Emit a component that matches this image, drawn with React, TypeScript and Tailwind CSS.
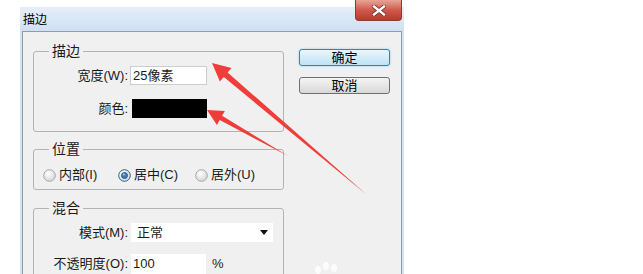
import React from 'react'

function Radio({ checked }: { checked?: boolean }) {
  return (
    <svg width="13" height="13" viewBox="0 0 13 13" className="shrink-0">
      <defs>
        <radialGradient id={checked ? 'rc' : 'ru'} cx="0.4" cy="0.35" r="0.7">
          <stop offset="0" stopColor="#ffffff" />
          <stop offset="1" stopColor="#d4d4d4" />
        </radialGradient>
      </defs>
      <circle cx="6.5" cy="6.5" r="5.8" fill={`url(#${checked ? 'rc' : 'ru'})`} stroke={checked ? '#2c628b' : '#a6a6a6'} strokeWidth="1" />
      {checked && <circle cx="6.5" cy="6.5" r="3" fill="#3a7cc0" stroke="#1d4c76" strokeWidth="0.8" />}
      {checked && <circle cx="5.8" cy="5.6" r="1" fill="#a9d4f5" />}
    </svg>
  )
}

function Group({ title, className, children }: { title: string; className: string; children: React.ReactNode }) {
  return (
    <fieldset className={`w-[251px] border border-[#b3b3b3] rounded-[3px] ${className}`}>
      <legend className="ml-[15px] px-[3px] h-[16px] leading-[16px] text-[14px] text-[#1a1a1a]">{title}</legend>
      {children}
    </fieldset>
  )
}

export default function App() {
  return (
    <div className="relative w-[643px] h-[274px] overflow-hidden bg-white pt-[7px] pl-[20px] text-[13px] text-[#1a1a1a] font-['Liberation_Sans','Noto_Sans_CJK_SC',sans-serif]">
      <div className="w-[384px] h-[267px] flex flex-col px-[2px] bg-[#d3e2f2]">
        <div className="h-[24px] shrink-0 -mx-[2px] pl-[3px] pt-[2px] flex items-center bg-gradient-to-b from-[#e6eef8] to-[#d0e0f2] text-[12px] text-black">
          描边
        </div>
        <div className="flex-1 flex border border-[#8d9cb0] bg-[#f0f0f0]">
          <div className="pl-[10px] pt-[11px] flex flex-col">
            <Group title="描边" className="h-[89px] shrink-0">
              <div className="mt-[7px] h-[19px] flex items-center">
                <span className="w-[94px] text-right">宽度(W):</span>
                <div className="ml-[2px] w-[77px] h-[19px] bg-white border border-[#c9ced4] flex items-center pl-[2px]">25像素</div>
              </div>
              <div className="mt-[14px] h-[19px] flex items-center">
                <span className="w-[94px] text-right">颜色:</span>
                <div className="ml-[4px] w-[75px] h-[19px] bg-black" />
              </div>
            </Group>
            <Group title="位置" className="mt-[9px] h-[49px] shrink-0">
              <div className="mt-[11px] h-[14px] pl-[9px] flex items-center">
                <div className="w-[75px] flex items-center gap-[3px]">
                  <Radio />
                  <span>内部(I)</span>
                </div>
                <div className="w-[77px] flex items-center gap-[3px]">
                  <Radio checked />
                  <span>居中(C)</span>
                </div>
                <div className="flex items-center gap-[3px]">
                  <Radio />
                  <span>居外(U)</span>
                </div>
              </div>
            </Group>
            <Group title="混合" className="mt-[10px] h-[100px] shrink-0">
              <div className="mt-[7px] h-[19px] flex items-center">
                <span className="w-[94px] text-right">模式(M):</span>
                <div className="ml-[3px] w-[142px] h-[19px] bg-white flex items-center justify-between pl-[6px] pr-[5px]">
                  <span>正常</span>
                  <svg width="8" height="5" viewBox="0 0 8 5">
                    <path d="M0 0 H8 L4 5 Z" fill="#111" />
                  </svg>
                </div>
              </div>
              <div className="mt-[12px] h-[20px] flex items-center">
                <span className="w-[94px] text-right">不透明度(O):</span>
                <div className="ml-[3px] w-[75px] h-[20px] bg-white flex items-center pl-[2px]">100</div>
                <span className="ml-[6px]">%</span>
              </div>
            </Group>
          </div>
          <div className="ml-[15px] pt-[17px] flex flex-col">
            <button className="w-[91px] h-[17px] rounded-[3px] border border-[#3c7fb1] bg-gradient-to-b from-[#eaf6fd] to-[#bde3f6] shadow-[0_0_2px_#6fc3ee] flex items-center justify-center text-[13px] text-black">
              确定
            </button>
            <button className="mt-[11px] w-[91px] h-[17px] rounded-[3px] border border-[#707070] bg-gradient-to-b from-[#f4f4f4] to-[#d8d8d8] flex items-center justify-center text-[13px] text-black">
              取消
            </button>
          </div>
        </div>
      </div>

      <div className="absolute left-[355px] top-0 w-[47px] h-[21px] rounded-b-[4px] border border-t-0 border-[#8e3b31] bg-gradient-to-b from-[#e6a497] via-[#cf5a4c] to-[#b8392c] flex items-center justify-center">
        <svg width="14" height="11" viewBox="0 0 14 11">
          <path d="M2 1.5 L12 9.5 M12 1.5 L2 9.5" stroke="#6b2a22" strokeWidth="4" strokeLinecap="square" />
          <path d="M2 1.5 L12 9.5 M12 1.5 L2 9.5" stroke="#ffffff" strokeWidth="2.4" strokeLinecap="square" />
        </svg>
      </div>

      <svg className="absolute inset-0 pointer-events-none" width="643" height="274" viewBox="0 0 643 274">
        <polygon points="212,63 231.5,67.9 227.6,72.4 367,195 223.8,77 219.9,81.5" fill="#ef3e3a" />
        <polygon points="207,110 224.9,110.9 222.1,115.7 288,156 219.7,120.1 216.9,124.9" fill="#ef3e3a" />
        <g fill="#ffffff" opacity="0.85">
          <ellipse cx="318" cy="270" rx="3" ry="4" />
          <ellipse cx="326" cy="266" rx="3" ry="4" />
          <ellipse cx="334" cy="268" rx="3" ry="4" />
        </g>
      </svg>
    </div>
  )
}
